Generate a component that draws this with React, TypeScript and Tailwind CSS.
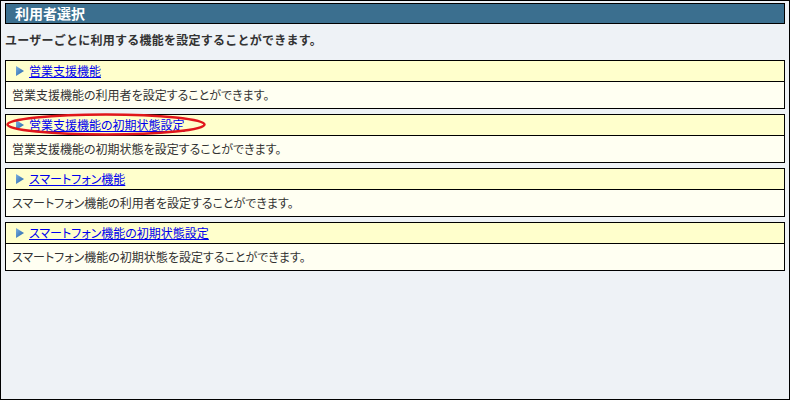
import React from 'react'

const ITEMS = [
  { title: '営業支援機能', desc: '営業支援機能の利用者を設定することができます。' },
  { title: '営業支援機能の初期状態設定', desc: '営業支援機能の初期状態を設定することができます。', marked: true },
  { title: 'スマートフォン機能', desc: 'スマートフォン機能の利用者を設定することができます。' },
  { title: 'スマートフォン機能の初期状態設定', desc: 'スマートフォン機能の初期状態を設定することができます。' },
]

function Arrow() {
  return (
    <svg width="8" height="10" viewBox="0 0 8 10" className="shrink-0">
      <defs>
        <linearGradient id="arr" x1="0" y1="0" x2="1" y2="1">
          <stop offset="0" stopColor="#7fb2e0" />
          <stop offset="1" stopColor="#1c5fa8" />
        </linearGradient>
      </defs>
      <path d="M0 0 L8 5 L0 10 Z" fill="url(#arr)" />
    </svg>
  )
}

export default function App() {
  return (
    <div
      className="w-[790px] h-[400px] border border-black bg-[#eef2f6] px-[4px] pt-[2px] text-[12px] text-[#333]"
      style={{ fontFamily: '"Noto Sans CJK JP", "Liberation Sans", sans-serif' }}
    >
      <div className="h-[21px] border border-black bg-[#3b6f8f] pl-[9px] text-[14px] font-bold leading-[19px] text-white">
        利用者選択
      </div>
      <div className="pt-[8px] pb-[12px] leading-[16px] font-bold tracking-[0.25px] text-[#333]">
        ユーザーごとに利用する機能を設定することができます。
      </div>
      {ITEMS.map(item => (
        <div key={item.title} className="relative mb-[5px] border border-black [font-feature-settings:'palt']">
          <div className="flex h-[21px] items-center gap-[5px] border-b border-black bg-[#ffffcc] pl-[10px]">
            <Arrow />
            <a href="#" className="text-[#0000ee] underline leading-[16px]">{item.title}</a>
          </div>
          <div className="h-[26px] bg-[#fffff2] pl-[6px] leading-[25px]">{item.desc}</div>
          {item.marked && (
            <svg width="206" height="26" className="pointer-events-none absolute left-[-2px] top-[-3px]">
              <ellipse cx="102" cy="12.5" rx="98.5" ry="10" fill="none" stroke="#e0161b" strokeWidth="2.5" />
            </svg>
          )}
        </div>
      ))}
    </div>
  )
}
